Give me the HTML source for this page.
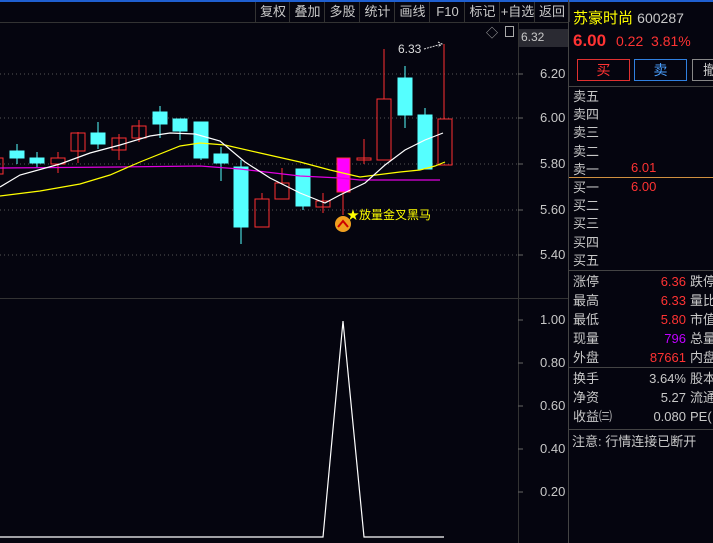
<!DOCTYPE html><html><head><meta charset="utf-8"><style>
body{margin:0;width:713px;height:543px;background:#05050f;overflow:hidden;font-family:"Liberation Sans","Noto Sans CJK SC",sans-serif;color:#c8c8c8;position:relative}
.a{position:absolute;white-space:nowrap}
.tb{position:absolute;top:2px;height:20px;font-size:13px;line-height:20px;text-align:center;border-left:1px solid #333;color:#c8c8c8}
.lab{font-size:13px;color:#c8c8c8}
.r{color:#ff3333}
</style></head><body>
<div class="a" style="left:0;top:0;width:713px;height:2px;background:#1f5fd0"></div>
<div class="tb" style="left:255px;width:34px">复权</div>
<div class="tb" style="left:289px;width:35px">叠加</div>
<div class="tb" style="left:324px;width:35px">多股</div>
<div class="tb" style="left:359px;width:35px">统计</div>
<div class="tb" style="left:394px;width:35px">画线</div>
<div class="tb" style="left:429px;width:35px">F10</div>
<div class="tb" style="left:464px;width:35px">标记</div>
<div class="tb" style="left:499px;width:35px">+自选</div>
<div class="tb" style="left:534px;width:34px;border-right:1px solid #333">返回</div>
<div class="a" style="left:0;top:22px;width:568px;height:1px;background:#333"></div>
<div class="a" style="left:518px;top:22px;width:1px;height:521px;background:#333"></div>
<div class="a" style="left:568px;top:0;width:1px;height:543px;background:#444"></div>
<div class="a" style="left:0;top:298px;width:568px;height:1px;background:#333"></div>
<div class="a" style="left:519px;top:29px;width:49px;height:18px;background:#2a2a32"></div>
<div class="a lab" style="left:521px;top:30px;font-size:12px">6.32</div>
<div class="a" style="left:486px;top:24px;font-size:12px;color:#aaa">◇</div>
<div class="a" style="left:505px;top:26px;width:9px;height:11px;border:1px solid #aaa;box-sizing:border-box"></div>
<svg class="a" style="left:0;top:0" width="568" height="543">
<g stroke="#555" stroke-dasharray="1,3"><line x1="0" y1="74" x2="518" y2="74"/><line x1="0" y1="118" x2="518" y2="118"/><line x1="0" y1="164" x2="518" y2="164"/><line x1="0" y1="210" x2="518" y2="210"/><line x1="0" y1="255" x2="518" y2="255"/></g>
<g stroke="#666"><line x1="518" y1="74" x2="523" y2="74"/><line x1="518" y1="118" x2="523" y2="118"/><line x1="518" y1="164" x2="523" y2="164"/><line x1="518" y1="210" x2="523" y2="210"/><line x1="518" y1="255" x2="523" y2="255"/><line x1="518" y1="320" x2="523" y2="320"/><line x1="518" y1="363" x2="523" y2="363"/><line x1="518" y1="406" x2="523" y2="406"/><line x1="518" y1="449" x2="523" y2="449"/><line x1="518" y1="492" x2="523" y2="492"/></g>
<g fill="#55ffff" stroke="#55ffff" shape-rendering="crispEdges">
<line x1="17" y1="144" x2="17" y2="164"/><rect x="10" y="151" width="14" height="7"/>
<line x1="37" y1="152" x2="37" y2="168"/><rect x="30" y="158" width="14" height="5"/>
<line x1="98" y1="122" x2="98" y2="149"/><rect x="91" y="133" width="14" height="11"/>
<line x1="160" y1="106" x2="160" y2="138"/><rect x="153" y="112" width="14" height="12"/>
<line x1="180" y1="119" x2="180" y2="140"/><rect x="173" y="119" width="14" height="12"/>
<line x1="201" y1="122" x2="201" y2="160"/><rect x="194" y="122" width="14" height="36"/>
<line x1="221" y1="147" x2="221" y2="181"/><rect x="214" y="154" width="14" height="9"/>
<line x1="241" y1="160" x2="241" y2="244"/><rect x="234" y="167" width="14" height="60"/>
<line x1="303" y1="169" x2="303" y2="210"/><rect x="296" y="169" width="14" height="37"/>
<line x1="405" y1="66" x2="405" y2="128"/><rect x="398" y="78" width="14" height="37"/>
<line x1="425" y1="108" x2="425" y2="169"/><rect x="418" y="115" width="14" height="54"/>
</g>
<g fill="none" stroke="#ff3030" stroke-width="1.3" shape-rendering="crispEdges">
<line x1="58" y1="152" x2="58" y2="158"/><line x1="58" y1="165" x2="58" y2="173"/><rect x="51" y="158" width="14" height="6"/>
<line x1="78" y1="132" x2="78" y2="163"/><rect x="71" y="133" width="14" height="18"/>
<line x1="119" y1="134" x2="119" y2="160"/><rect x="112" y="138" width="14" height="12"/>
<line x1="139" y1="120" x2="139" y2="142"/><rect x="132" y="126" width="14" height="12"/>
<line x1="262" y1="193" x2="262" y2="199"/><rect x="255" y="199" width="14" height="28"/>
<line x1="282" y1="168" x2="282" y2="183"/><rect x="275" y="183" width="14" height="16"/>
<line x1="323" y1="193" x2="323" y2="213"/><rect x="316" y="201" width="14" height="6"/>
<line x1="364" y1="139" x2="364" y2="164"/><rect x="357" y="158" width="14" height="2"/>
<line x1="384" y1="49" x2="384" y2="99"/><rect x="377" y="99" width="14" height="61"/>
<line x1="444" y1="44" x2="444" y2="119"/><rect x="438" y="119" width="14" height="46"/>
<rect x="-5" y="158" width="8" height="16"/>
<line x1="343" y1="192" x2="343" y2="215"/>
</g>
<rect x="337" y="158" width="13" height="34" fill="#ff00ff" stroke="#ff3333"/>
<polyline fill="none" stroke="#e000e0" stroke-width="1.2" points="0,168 120,167 200,166 240,169 300,176 340,178 360,180 440,180"/>
<polyline fill="none" stroke="#ffff00" stroke-width="1.2" points="0,196 40,191 80,184 110,175 140,162 180,146 200,143 225,145 260,153 300,162 330,170 360,177 400,172 420,170 435,166 445,162"/>
<polyline fill="none" stroke="#ffffff" stroke-width="1.2" points="0,187 20,175 60,164 90,153 120,145 150,136 170,133 195,134 220,141 245,162 270,178 300,193 325,203 340,195 365,183 385,165 405,150 425,140 443,133"/>
<circle cx="343" cy="224" r="8" fill="#f0a020"/><path d="M338,227 L343,221 L348,227" stroke="#c00" stroke-width="2" fill="none"/>
<text x="347" y="219" fill="#ffff00" font-size="12" font-family="Liberation Sans,Noto Sans CJK SC,sans-serif">★放量金叉黑马</text>
<text x="398" y="53" fill="#ddd" font-size="12" font-family="Liberation Sans,sans-serif">6.33</text>
<path d="M424,49 L442,44 M438,42 L442,44 L438,47" stroke="#ddd" fill="none" stroke-dasharray="2,1"/>
<polyline fill="none" stroke="#fff" stroke-width="1.2" points="0,537 323,537 343,321 364,537 444,537"/>
</svg>
<div class="a lab" style="left:540px;top:66px">6.20</div>
<div class="a lab" style="left:540px;top:110px">6.00</div>
<div class="a lab" style="left:540px;top:156px">5.80</div>
<div class="a lab" style="left:540px;top:202px">5.60</div>
<div class="a lab" style="left:540px;top:247px">5.40</div>
<div class="a lab" style="left:540px;top:312px">1.00</div>
<div class="a lab" style="left:540px;top:355px">0.80</div>
<div class="a lab" style="left:540px;top:398px">0.60</div>
<div class="a lab" style="left:540px;top:441px">0.40</div>
<div class="a lab" style="left:540px;top:484px">0.20</div>
<div class="a" style="left:573px;top:7px;font-size:15px;color:#ffff00">苏豪时尚 <span style="color:#c8c8c8;font-size:14px">600287</span></div>
<div class="a r" style="left:573px;top:31px;font-size:17px;font-weight:bold">6.00</div>
<div class="a r" style="left:616px;top:33px;font-size:14px">0.22&nbsp;&nbsp;3.81%</div>
<div class="a r" style="left:577px;top:59px;width:51px;height:20px;border:1px solid #e03030;text-align:center;line-height:20px;font-size:14px">买</div>
<div class="a" style="left:634px;top:59px;width:51px;height:20px;border:1px solid #3080e0;text-align:center;line-height:20px;font-size:14px;color:#4aa0ff">卖</div>
<div class="a" style="left:692px;top:59px;width:30px;height:20px;border:1px solid #888;line-height:20px;font-size:14px;padding-left:10px">撤</div>
<div class="a" style="left:569px;top:86px;width:144px;height:1px;background:#444"></div>
<div class="a" style="left:569px;top:177px;width:144px;height:1px;background:#d09040"></div>
<div class="a" style="left:569px;top:270px;width:144px;height:1px;background:#444"></div>
<div class="a" style="left:569px;top:367px;width:144px;height:1px;background:#444"></div>
<div class="a" style="left:569px;top:429px;width:144px;height:1px;background:#444"></div>
<div class="a" style="left:573px;top:88px;font-size:13px;line-height:18.2px">卖五<br>卖四<br>卖三<br>卖二<br>卖一</div>
<div class="a r" style="left:631px;top:160px;font-size:13px">6.01</div>
<div class="a" style="left:573px;top:179px;font-size:13px;line-height:18.2px">买一<br>买二<br>买三<br>买四<br>买五</div>
<div class="a r" style="left:631px;top:179px;font-size:13px">6.00</div>
<div class="a" style="left:573px;top:272px;font-size:13px;line-height:19px">涨停<br>最高<br>最低<br>现量<br>外盘</div>
<div class="a" style="left:600px;top:272px;width:86px;text-align:right;font-size:13px;line-height:19px"><span class="r">6.36</span><br><span class="r">6.33</span><br><span class="r">5.80</span><br><span style="color:#c000ff">796</span><br><span class="r">87661</span></div>
<div class="a" style="left:690px;top:272px;font-size:13px;line-height:19px">跌停<br>量比<br>市值<br>总量<br>内盘</div>
<div class="a" style="left:573px;top:369px;font-size:13px;line-height:19px">换手<br>净资<br>收益㈢</div>
<div class="a" style="left:600px;top:369px;width:86px;text-align:right;font-size:13px;line-height:19px">3.64%<br>5.27<br>0.080</div>
<div class="a" style="left:690px;top:369px;font-size:13px;line-height:19px">股本<br>流通<br>PE(</div>
<div class="a" style="left:572px;top:431px;font-size:13px">注意: 行情连接已断开</div>
</body></html>
